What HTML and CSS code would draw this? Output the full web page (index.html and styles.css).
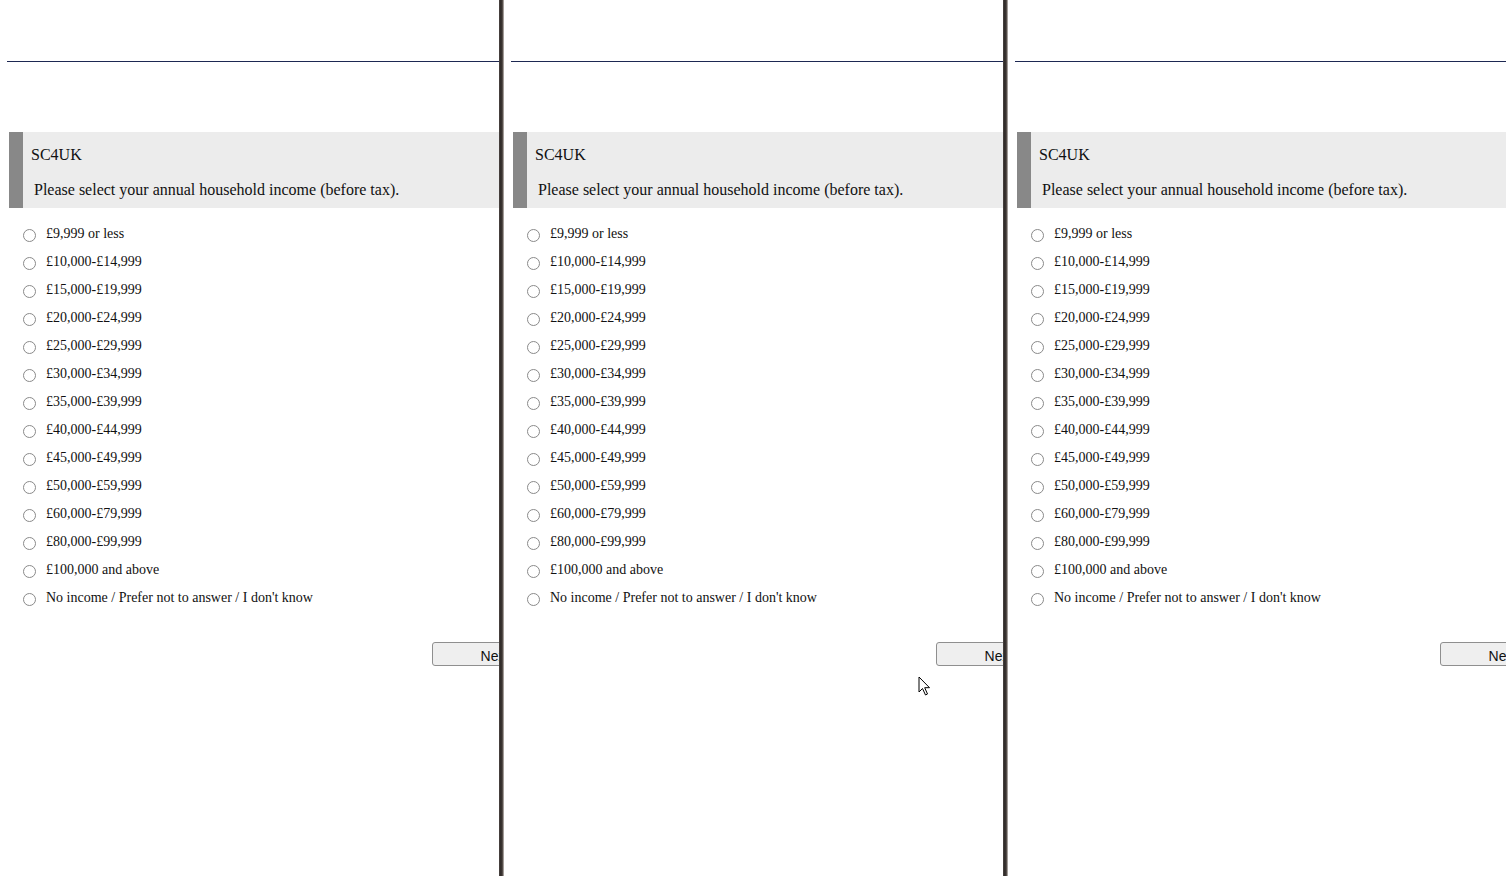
FILE: index.html
```html
<!DOCTYPE html>
<html>
<head>
<meta charset="utf-8">
<link rel="stylesheet" href="styles.css">
</head>
<body>
<div class="screen">
  <div class="panel">
    <div class="topbar"></div>
    <div class="question">
      <div class="q-title">SC4UK</div>
      <div class="q-text">Please select your annual household income (before tax).</div>
    </div>
    <ul class="options">
      <li><span class="radio"></span><span>£9,999 or less</span></li>
      <li><span class="radio"></span><span>£10,000-£14,999</span></li>
      <li><span class="radio"></span><span>£15,000-£19,999</span></li>
      <li><span class="radio"></span><span>£20,000-£24,999</span></li>
      <li><span class="radio"></span><span>£25,000-£29,999</span></li>
      <li><span class="radio"></span><span>£30,000-£34,999</span></li>
      <li><span class="radio"></span><span>£35,000-£39,999</span></li>
      <li><span class="radio"></span><span>£40,000-£44,999</span></li>
      <li><span class="radio"></span><span>£45,000-£49,999</span></li>
      <li><span class="radio"></span><span>£50,000-£59,999</span></li>
      <li><span class="radio"></span><span>£60,000-£79,999</span></li>
      <li><span class="radio"></span><span>£80,000-£99,999</span></li>
      <li><span class="radio"></span><span>£100,000 and above</span></li>
      <li><span class="radio"></span><span>No income / Prefer not to answer / I don't know</span></li>
    </ul>
    <div class="actions"><button class="next">Next</button></div>
  </div>
  <div class="divider"></div>
  <div class="panel">
    <div class="topbar"></div>
    <div class="question">
      <div class="q-title">SC4UK</div>
      <div class="q-text">Please select your annual household income (before tax).</div>
    </div>
    <ul class="options">
      <li><span class="radio"></span><span>£9,999 or less</span></li>
      <li><span class="radio"></span><span>£10,000-£14,999</span></li>
      <li><span class="radio"></span><span>£15,000-£19,999</span></li>
      <li><span class="radio"></span><span>£20,000-£24,999</span></li>
      <li><span class="radio"></span><span>£25,000-£29,999</span></li>
      <li><span class="radio"></span><span>£30,000-£34,999</span></li>
      <li><span class="radio"></span><span>£35,000-£39,999</span></li>
      <li><span class="radio"></span><span>£40,000-£44,999</span></li>
      <li><span class="radio"></span><span>£45,000-£49,999</span></li>
      <li><span class="radio"></span><span>£50,000-£59,999</span></li>
      <li><span class="radio"></span><span>£60,000-£79,999</span></li>
      <li><span class="radio"></span><span>£80,000-£99,999</span></li>
      <li><span class="radio"></span><span>£100,000 and above</span></li>
      <li><span class="radio"></span><span>No income / Prefer not to answer / I don't know</span></li>
    </ul>
    <div class="actions"><button class="next">Next</button></div>
  </div>
  <div class="divider"></div>
  <div class="panel">
    <div class="topbar"></div>
    <div class="question">
      <div class="q-title">SC4UK</div>
      <div class="q-text">Please select your annual household income (before tax).</div>
    </div>
    <ul class="options">
      <li><span class="radio"></span><span>£9,999 or less</span></li>
      <li><span class="radio"></span><span>£10,000-£14,999</span></li>
      <li><span class="radio"></span><span>£15,000-£19,999</span></li>
      <li><span class="radio"></span><span>£20,000-£24,999</span></li>
      <li><span class="radio"></span><span>£25,000-£29,999</span></li>
      <li><span class="radio"></span><span>£30,000-£34,999</span></li>
      <li><span class="radio"></span><span>£35,000-£39,999</span></li>
      <li><span class="radio"></span><span>£40,000-£44,999</span></li>
      <li><span class="radio"></span><span>£45,000-£49,999</span></li>
      <li><span class="radio"></span><span>£50,000-£59,999</span></li>
      <li><span class="radio"></span><span>£60,000-£79,999</span></li>
      <li><span class="radio"></span><span>£80,000-£99,999</span></li>
      <li><span class="radio"></span><span>£100,000 and above</span></li>
      <li><span class="radio"></span><span>No income / Prefer not to answer / I don't know</span></li>
    </ul>
    <div class="actions"><button class="next">Next</button></div>
  </div>
</div>
<svg class="cursor" width="14" height="21" viewBox="0 0 14 21" xmlns="http://www.w3.org/2000/svg">
  <path d="M1 1 L1 16 L4.5 12.5 L7.5 19 L9.5 18 L6.7 11.7 L11.5 11.7 Z" fill="#fff" stroke="#000" stroke-width="1" stroke-linejoin="miter"/>
</svg>
</body>
</html>
```
FILE: styles.css
```css
html, body {
  margin: 0;
  padding: 0;
  background: #fff;
  overflow: hidden;
}
.screen {
  display: flex;
  width: 1506px;
  height: 876px;
  overflow: hidden;
}
.panel {
  flex: 0 0 499px;
  width: 499px;
  height: 876px;
  overflow: hidden;
  font-family: "Liberation Serif", "Times New Roman", serif;
  color: #111;
}
.panel:last-child {
  flex: 1 1 auto;
}
.divider {
  flex: 0 0 5px;
  width: 5px;
  height: 876px;
  background: linear-gradient(to right, #5a5350 0, #2f2a28 1px, #3a3431 3px, #6d6560 4px, #d8d4d2 5px);
}
.topbar {
  height: 61px;
  margin-left: 7px;
  border-bottom: 1px solid #1d2852;
}
.question {
  margin: 70px 0 0 9px;
  height: 76px;
  box-sizing: border-box;
  background: #ececec;
  border-left: 14px solid #888888;
  padding: 13px 0 0 8px;
}
.q-title {
  font-size: 16px;
  line-height: 20px;
}
.q-text {
  font-size: 16px;
  line-height: 20px;
  margin: 15px 0 0 3px;
}
.options {
  list-style: none;
  margin: 13px 0 0 0;
  padding: 0 0 0 23px;
}
.options li {
  display: flex;
  align-items: center;
  height: 28px;
  font-size: 14px;
  line-height: 16px;
}
.options li span:last-child {
  margin-top: -2px;
}
.radio {
  flex: 0 0 auto;
  width: 13px;
  height: 13px;
  box-sizing: border-box;
  border: 1px solid #8a8a8a;
  border-radius: 50%;
  background: #fff;
  margin-right: 10px;
  margin-top: 1px;
}
.actions {
  margin: 29px 0 0 432px;
  width: 130px;
}
.next {
  width: 126px;
  height: 24px;
  box-sizing: border-box;
  border: 1px solid #8f8f8f;
  border-radius: 3px;
  background: #efefef;
  font-family: "Liberation Sans", Arial, sans-serif;
  font-size: 14px;
  color: #111;
  padding: 3px 0 0 0;
}
.cursor {
  position: absolute;
  left: 918px;
  top: 676px;
}
```
